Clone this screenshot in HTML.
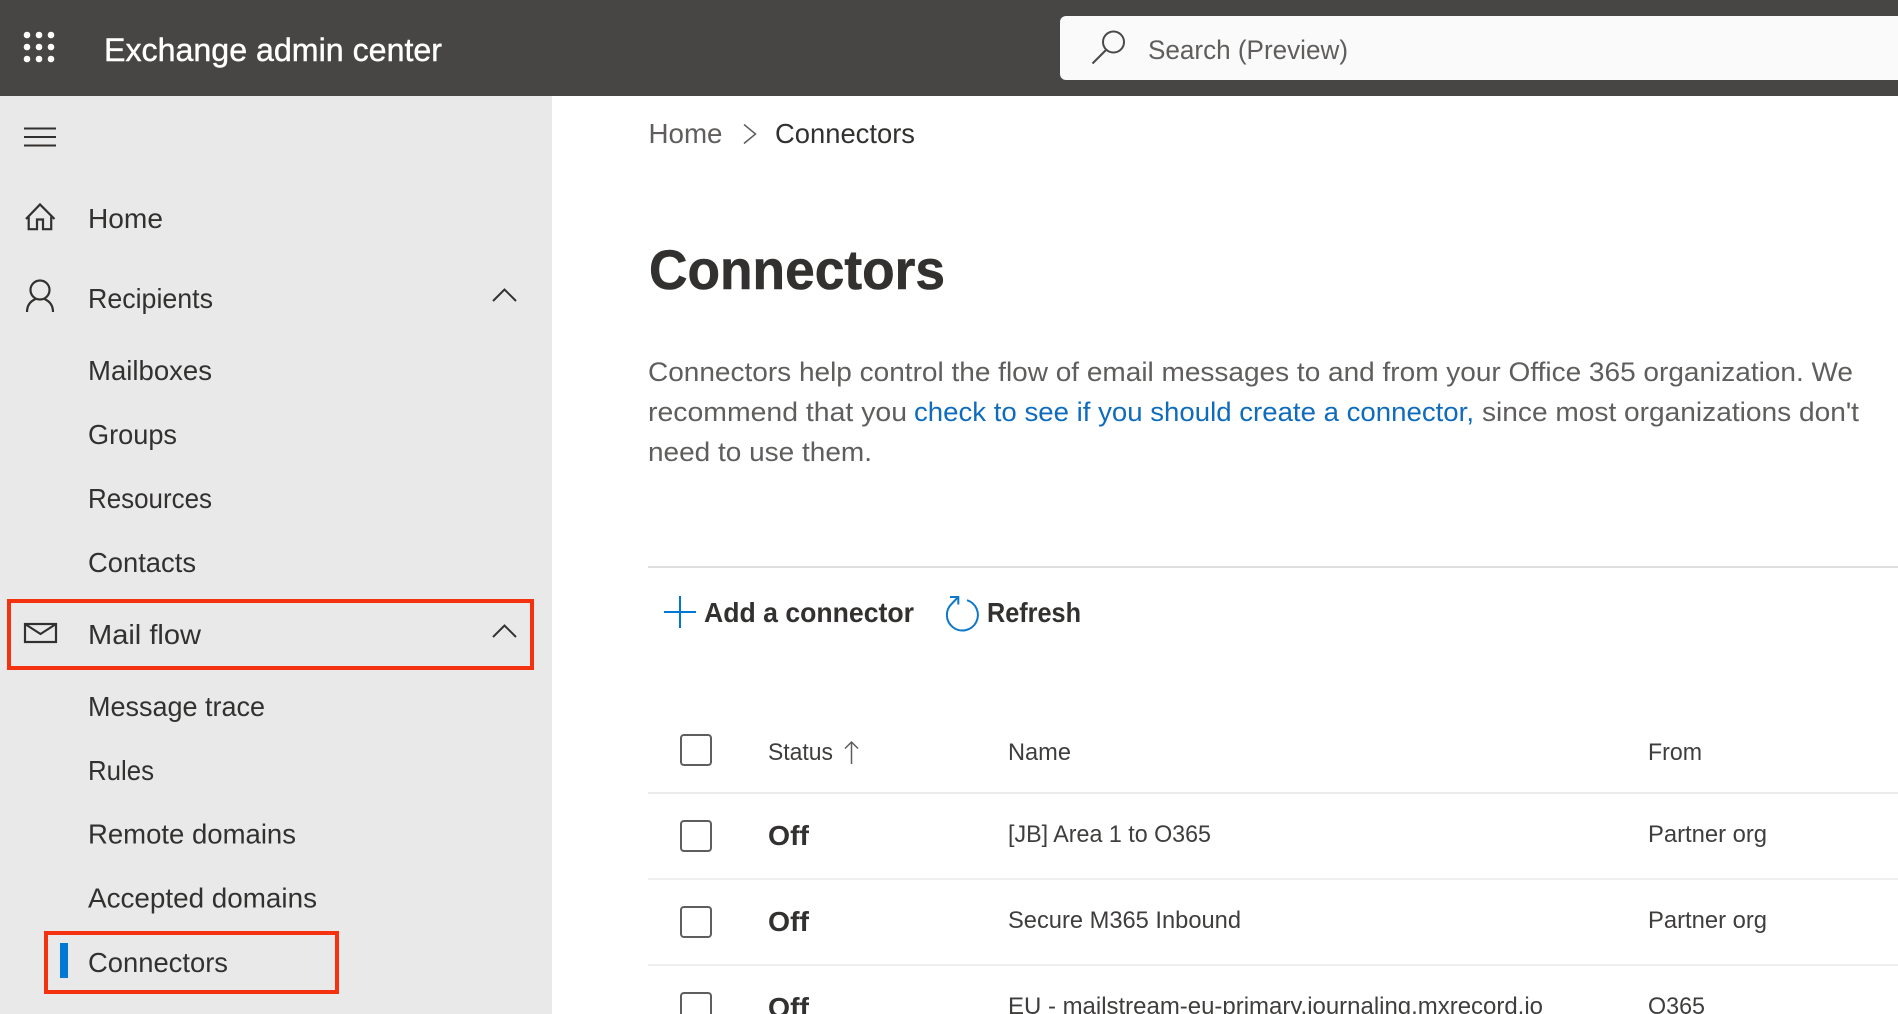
<!DOCTYPE html>
<html lang="en"><head><meta charset="utf-8"><title>Exchange admin center</title>
<style>
html,body{margin:0;padding:0;background:#fff;width:1898px;height:1014px;overflow:hidden}
svg{display:block}
text{font-family:"Liberation Sans",sans-serif;fill:#323130;font-size:28px}
.g{fill:#5f5e5d}
.b{font-weight:700}
.s{font-size:24px;fill:#3f3e3d}
.p{font-size:27px;fill:#5f5e5d}
</style></head><body>
<svg xmlns="http://www.w3.org/2000/svg" width="1898" height="1014" viewBox="0 0 1898 1014">
<rect x="0" y="96" width="552" height="918" fill="#e9e9e9"/>
<rect x="0" y="0" width="1898" height="96" fill="#484644"/>

<!-- waffle -->
<g fill="#fff">
<circle cx="27" cy="35" r="3.300"/><circle cx="39" cy="35" r="3.300"/><circle cx="51" cy="35" r="3.300"/>
<circle cx="27" cy="47" r="3.300"/><circle cx="39" cy="47" r="3.300"/><circle cx="51" cy="47" r="3.300"/>
<circle cx="27" cy="59" r="3.300"/><circle cx="39" cy="59" r="3.300"/><circle cx="51" cy="59" r="3.300"/>
</g>
<text x="104" y="61" style="font-size:32px;fill:#fff;stroke:#fff;stroke-width:.4" textLength="338" lengthAdjust="spacingAndGlyphs">Exchange admin center</text>

<!-- search -->
<path d="M1898 16H1066a6 6 0 0 0-6 6v52a6 6 0 0 0 6 6h832z" fill="#fafafa"/>
<g fill="none" stroke="#4a4948" stroke-width="2">
<circle cx="1113.500" cy="42" r="10.500"/>
<path d="M1106 50L1092.500 63.500"/>
</g>
<text x="1148" y="59" style="font-size:27px;fill:#605e5c" textLength="200" lengthAdjust="spacingAndGlyphs">Search (Preview)</text>

<!-- hamburger -->
<g stroke="#323130" stroke-width="2.200" fill="none">
<path d="M24 128.500H56M24 137H56M24 145.500H56" stroke-width="2"/>
<!-- home -->
<path d="M26 219L40 204.500L54.500 219M28.700 216.500V229.200H37V219.500H43V229.200H51.200V216.500"/>
<!-- person -->
<circle cx="40" cy="290" r="9.500"/>
<path d="M27 312C27 305 31 301 35.500 299M53 312C53 305 49 301 44.500 299"/>
<!-- chevrons -->
<path d="M493 301L504.500 289.500L516 301" stroke-width="2"/>
<path d="M493 637L504.500 625.500L516 637" stroke-width="2"/>
<!-- mail -->
<rect x="25" y="624" width="31" height="18"/>
<path d="M25 624L40.500 634L56 624"/>
</g>

<!-- nav -->
<text x="88" y="228" textLength="75" lengthAdjust="spacingAndGlyphs">Home</text>
<text x="88" y="308" textLength="125" lengthAdjust="spacingAndGlyphs">Recipients</text>
<text x="88" y="380" textLength="124" lengthAdjust="spacingAndGlyphs">Mailboxes</text>
<text x="88" y="444" textLength="89" lengthAdjust="spacingAndGlyphs">Groups</text>
<text x="88" y="508" textLength="124" lengthAdjust="spacingAndGlyphs">Resources</text>
<text x="88" y="572" textLength="108" lengthAdjust="spacingAndGlyphs">Contacts</text>
<text x="88" y="644" textLength="113" lengthAdjust="spacingAndGlyphs">Mail flow</text>
<text x="88" y="716" textLength="177" lengthAdjust="spacingAndGlyphs">Message trace</text>
<text x="88" y="780" textLength="66" lengthAdjust="spacingAndGlyphs">Rules</text>
<text x="88" y="843.500" textLength="208" lengthAdjust="spacingAndGlyphs">Remote domains</text>
<text x="88" y="907.500" textLength="229" lengthAdjust="spacingAndGlyphs">Accepted domains</text>
<text x="88" y="972" textLength="140" lengthAdjust="spacingAndGlyphs">Connectors</text>

<rect x="60" y="943" width="8" height="35" fill="#0078d4"/>
<rect x="9" y="601" width="523" height="67" fill="none" stroke="#f5320f" stroke-width="4"/>
<rect x="46" y="933" width="291" height="59" fill="none" stroke="#f5320f" stroke-width="4"/>

<!-- breadcrumb -->
<text class="g" x="648.500" y="143" textLength="74" lengthAdjust="spacingAndGlyphs">Home</text>
<path d="M744 124.500L755.500 134L744 143.500" fill="none" stroke="#605e5c" stroke-width="1.500"/>
<text x="775" y="143" textLength="140" lengthAdjust="spacingAndGlyphs">Connectors</text>

<!-- title -->
<text class="b" x="649" y="289" style="font-size:56px;stroke:#323130;stroke-width:.6" textLength="296" lengthAdjust="spacingAndGlyphs">Connectors</text>

<!-- paragraph -->
<text class="p" x="648" y="381" textLength="1205" lengthAdjust="spacingAndGlyphs">Connectors help control the flow of email messages to and from your Office 365 organization. We</text>
<text class="p" x="648" y="421" textLength="259" lengthAdjust="spacingAndGlyphs">recommend that you</text>
<text class="p" x="914" y="421" style="fill:#0f6cbd" textLength="560" lengthAdjust="spacingAndGlyphs">check to see if you should create a connector,</text>
<text class="p" x="1482" y="421" textLength="377" lengthAdjust="spacingAndGlyphs">since most organizations don't</text>
<text class="p" x="648" y="461" textLength="224" lengthAdjust="spacingAndGlyphs">need to use them.</text>

<rect x="648" y="566" width="1250" height="2" fill="#e1dfdd"/>

<!-- command bar -->
<path d="M664 612H696M680 596V628" stroke="#0078d4" stroke-width="2" fill="none"/>
<text class="b" x="704" y="622" textLength="210" lengthAdjust="spacingAndGlyphs">Add a connector</text>
<path d="M967 600.200A15.500 15.500 0 1 1 952 603.500L958.300 597" fill="none" stroke="#0f78c8" stroke-width="2"/>
<path d="M950 597H958.300V604.500" fill="none" stroke="#0f78c8" stroke-width="2"/>
<text class="b" x="987" y="622" textLength="94" lengthAdjust="spacingAndGlyphs">Refresh</text>

<!-- table header -->
<g fill="none" stroke="#5f5e5d" stroke-width="2">
<rect x="681" y="735" width="30" height="30" rx="3"/>
<rect x="681" y="821" width="30" height="30" rx="3"/>
<rect x="681" y="907" width="30" height="30" rx="3"/>
<rect x="681" y="993" width="30" height="30" rx="3"/>
<path d="M851.500 764V742M845 748.500L851.500 742L858 748.500" stroke-width="1.500"/>
</g>
<text class="s" x="768" y="760" textLength="65" lengthAdjust="spacingAndGlyphs">Status</text>
<text class="s" x="1008" y="760" textLength="63" lengthAdjust="spacingAndGlyphs">Name</text>
<text class="s" x="1648" y="760" textLength="54" lengthAdjust="spacingAndGlyphs">From</text>

<rect x="648" y="792" width="1250" height="2" fill="#edebe9"/>
<rect x="648" y="878" width="1250" height="2" fill="#f0efee"/>
<rect x="648" y="964" width="1250" height="2" fill="#f0efee"/>

<text class="b" x="768" y="845" textLength="41" lengthAdjust="spacingAndGlyphs">Off</text>
<text class="s" x="1008" y="842" textLength="203" lengthAdjust="spacingAndGlyphs">[JB] Area 1 to O365</text>
<text class="s" x="1648" y="842" textLength="119" lengthAdjust="spacingAndGlyphs">Partner org</text>

<text class="b" x="768" y="931" textLength="41" lengthAdjust="spacingAndGlyphs">Off</text>
<text class="s" x="1008" y="928" textLength="233" lengthAdjust="spacingAndGlyphs">Secure M365 Inbound</text>
<text class="s" x="1648" y="928" textLength="119" lengthAdjust="spacingAndGlyphs">Partner org</text>

<text class="b" x="768" y="1017" textLength="41" lengthAdjust="spacingAndGlyphs">Off</text>
<text class="s" x="1008" y="1014" textLength="535" lengthAdjust="spacingAndGlyphs">EU - mailstream-eu-primary.journaling.mxrecord.io</text>
<text class="s" x="1648" y="1014" textLength="57" lengthAdjust="spacingAndGlyphs">O365</text>
</svg>
</body></html>
